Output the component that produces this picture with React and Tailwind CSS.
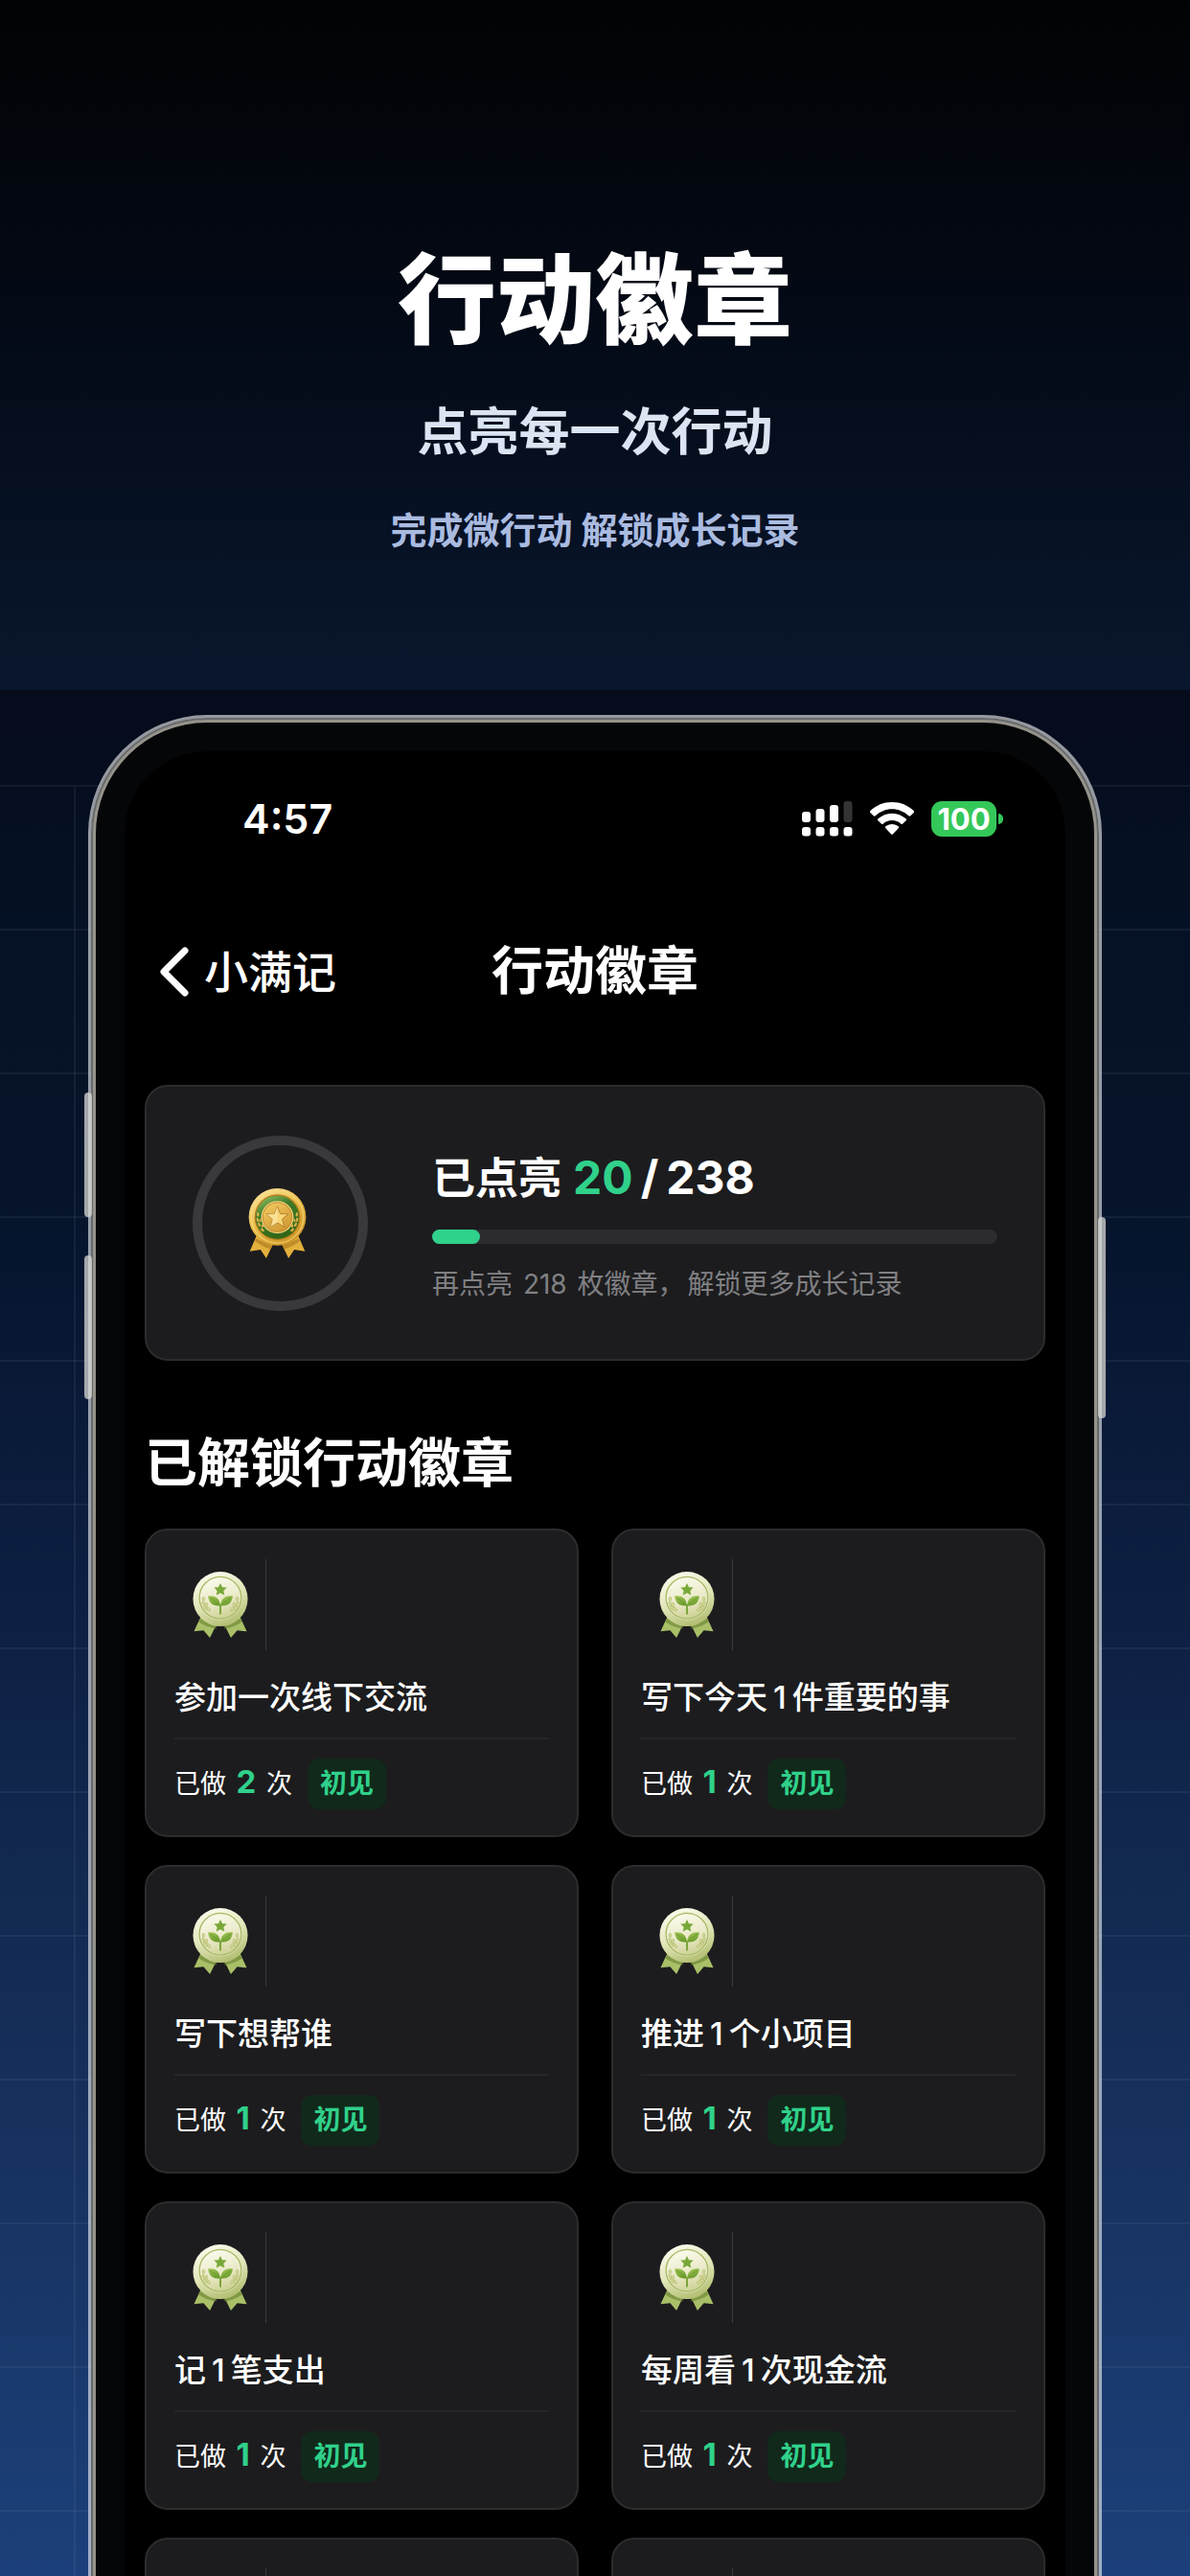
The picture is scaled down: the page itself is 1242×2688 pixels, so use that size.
const badges = [
  { title: '参加一次线下交流', count: 2, level: '初见' },
  { title: '写下今天1件重要的事', count: 1, level: '初见' },
  { title: '写下想帮谁', count: 1, level: '初见' },
  { title: '推进1个小项目', count: 1, level: '初见' },
  { title: '记1笔支出', count: 1, level: '初见' },
  { title: '每周看1次现金流', count: 1, level: '初见' },
];

const unlocked = 20;
const total = 238;

const SignalIcon = () => (
  <svg viewBox="0 0 53 37" className="w-[53px] h-[37px]" fill="#fff">
    <rect x="0" y="11" width="9" height="11" rx="3" />
    <rect x="14.5" y="8" width="9" height="14" rx="3" />
    <rect x="29" y="4" width="9" height="18" rx="3" />
    <rect x="43.5" y="0" width="9" height="22" rx="3" fill="#333" />
    <rect x="0" y="27" width="9" height="9.5" rx="3" />
    <rect x="14.5" y="27" width="9" height="9.5" rx="3" />
    <rect x="29" y="27" width="9" height="9.5" rx="3" />
    <rect x="43.5" y="27" width="9" height="9.5" rx="3" />
  </svg>
);

const WifiIcon = () => (
  <svg viewBox="0 0 138 102" className="w-[46px] h-[34px]" fill="#fff">
    <path d="M69 0C43 0 19 10 1 27Q-1 30 1 33L11 43Q14 45 17 43C31 30 49 22 69 22S107 30 121 43Q124 45 127 43L137 33Q139 30 137 27C119 10 95 0 69 0Z" />
    <path d="M69 35C52 35 37 42 25 52Q22 55 25 58L36 68Q38 70 41 68C49 61 58 57 69 57S89 61 97 68Q100 70 102 68L113 58Q116 55 113 52C101 42 86 35 69 35Z" />
    <path d="M69 69C61 69 54 72 49 76Q46 79 49 82L66 100Q69 103 72 100L89 82Q92 79 89 76C84 72 77 69 69 69Z" />
  </svg>
);

const GoldBadge = () => (
  <svg viewBox="0 0 182 220" className="w-[61px] h-[73px]">
    <defs>
      <linearGradient id="gold" x1="0.2" y1="0" x2="0.8" y2="1">
        <stop offset="0" stopColor="#fbe39a" />
        <stop offset="0.45" stopColor="#e9bd49" />
        <stop offset="1" stopColor="#c98f20" />
      </linearGradient>
      <linearGradient id="goldCore" x1="0.2" y1="0" x2="0.8" y2="1">
        <stop offset="0" stopColor="#f0c85f" />
        <stop offset="1" stopColor="#cf9630" />
      </linearGradient>
      <linearGradient id="greenRing" x1="0.2" y1="0" x2="0.7" y2="1">
        <stop offset="0" stopColor="#8bbb62" />
        <stop offset="0.35" stopColor="#3f7a28" />
        <stop offset="1" stopColor="#2f6416" />
      </linearGradient>
    </defs>
    <path d="M26 148L4 198L38 193L56 220L78 174Z" fill="#e3b03c" />
    <path d="M156 148L178 198L144 193L126 220L104 174Z" fill="#e3b03c" />
    <path d="M24 158L76 180L70 192Q40 182 20 166ZM158 158L106 180L112 192Q142 182 162 166Z" fill="#a8741c" opacity="0.6" />
    <circle cx="91" cy="90" r="90" fill="url(#gold)" />
    <circle cx="91" cy="90" r="82" fill="none" stroke="#f9dc85" strokeWidth="4" opacity="0.7" />
    <circle cx="91" cy="91" r="72" fill="#b57e1e" />
    <circle cx="91" cy="91" r="68" fill="url(#greenRing)" />
    <circle cx="91" cy="91" r="51" fill="#f2d27b" />
    <circle cx="91" cy="91" r="47" fill="#b67e25" />
    <circle cx="91" cy="91" r="45" fill="url(#goldCore)" />
    <path d="M91 56L100 80L125 81L106 97L113 122L91 108L69 122L76 97L57 81L82 80Z" fill="#f8d67a" stroke="#b8822a" strokeWidth="3" />
    <path d="M91 56L91 108L69 122L76 97L57 81L82 80Z" fill="#fce7a6" opacity="0.6" />
    <g fill="#dcb348">
      <ellipse cx="30" cy="82" rx="3.5" ry="7" />
      <ellipse cx="29" cy="99" rx="3.5" ry="7" transform="rotate(-12 29 99)" />
      <ellipse cx="37" cy="101" rx="3" ry="6" transform="rotate(18 37 101)" />
      <ellipse cx="34" cy="114" rx="3.5" ry="7" transform="rotate(-30 34 114)" />
      <ellipse cx="44" cy="118" rx="3" ry="6" />
      <ellipse cx="44" cy="131" rx="3.5" ry="7" transform="rotate(-48 44 131)" />
      <ellipse cx="152" cy="82" rx="3.5" ry="7" />
      <ellipse cx="153" cy="99" rx="3.5" ry="7" transform="rotate(12 153 99)" />
      <ellipse cx="145" cy="101" rx="3" ry="6" transform="rotate(-18 145 101)" />
      <ellipse cx="148" cy="114" rx="3.5" ry="7" transform="rotate(30 148 114)" />
      <ellipse cx="138" cy="118" rx="3" ry="6" />
      <ellipse cx="138" cy="131" rx="3.5" ry="7" transform="rotate(48 138 131)" />
    </g>
  </svg>
);

const SproutBadge = () => (
  <svg viewBox="0 0 174 208" className="w-[58px] h-[69px]">
    <defs>
      <linearGradient id="rim" x1="0.3" y1="0" x2="0.7" y2="1">
        <stop offset="0" stopColor="#fbfbec" />
        <stop offset="0.5" stopColor="#e2e5b8" />
        <stop offset="1" stopColor="#aebb6c" />
      </linearGradient>
      <linearGradient id="face" x1="0.3" y1="0" x2="0.6" y2="1">
        <stop offset="0" stopColor="#fcfbee" />
        <stop offset="0.6" stopColor="#e9e9c6" />
        <stop offset="1" stopColor="#ccd193" />
      </linearGradient>
      <linearGradient id="leaf" x1="0" y1="0" x2="0.5" y2="1">
        <stop offset="0" stopColor="#a5c858" />
        <stop offset="1" stopColor="#6c9c2c" />
      </linearGradient>
    </defs>
    <path d="M26 140L4 188L34 185L54 208L78 160Z" fill="#a9bf68" />
    <path d="M148 140L170 188L140 185L120 208L96 160Z" fill="#a9bf68" />
    <path d="M24 148L78 168L73 180Q40 172 19 158ZM150 148L96 168L101 180Q134 172 155 158Z" fill="#65812e" opacity="0.6" />
    <circle cx="87" cy="86" r="86" fill="url(#rim)" />
    <circle cx="87" cy="82" r="70" fill="#f3f3d6" opacity="0.8" />
    <circle cx="87" cy="82" r="66" fill="url(#face)" stroke="#a8b964" strokeWidth="4" />
    <path d="M87 36L93 49L107 50L97 60L100 74L87 67L74 74L77 60L67 50L81 49Z" fill="#78a838" />
    <path d="M48 77C70 74 85 84 86 106C66 111 51 100 48 77Z" fill="url(#leaf)" />
    <path d="M126 77C104 74 89 84 88 106C108 111 123 100 126 77Z" fill="url(#leaf)" />
    <path d="M54 82Q72 90 87 110V133M120 82Q102 90 87 110" fill="none" stroke="#6d9a33" strokeWidth="3" />
    <path d="M87 104V132" stroke="#7ba53c" strokeWidth="6" strokeLinecap="round" />
    <g fill="#d5d797" stroke="#abb566" strokeWidth="1.5">
      <ellipse cx="34" cy="86" rx="4" ry="7" />
      <ellipse cx="34" cy="101" rx="4" ry="7" transform="rotate(-25 34 101)" />
      <ellipse cx="43" cy="104" rx="4" ry="7" transform="rotate(8 43 104)" />
      <ellipse cx="40" cy="115" rx="4" ry="8" transform="rotate(-45 40 115)" />
      <ellipse cx="50" cy="118" rx="4" ry="8" transform="rotate(-35 50 118)" />
      <ellipse cx="140" cy="86" rx="4" ry="7" />
      <ellipse cx="140" cy="101" rx="4" ry="7" transform="rotate(25 140 101)" />
      <ellipse cx="131" cy="104" rx="4" ry="7" transform="rotate(-8 131 104)" />
      <ellipse cx="134" cy="115" rx="4" ry="8" transform="rotate(45 134 115)" />
      <ellipse cx="124" cy="118" rx="4" ry="8" transform="rotate(35 124 118)" />
    </g>
  </svg>
);

const StatusBar = () => (
  <div className="flex items-center justify-between pl-[123px] pr-[65px] pt-[45px]">
    <span className="text-[43px] leading-[50px] font-semibold">4:57</span>
    <div className="flex items-center gap-[18px]">
      <SignalIcon />
      <WifiIcon />
      <div className="flex items-center gap-[2px]">
        <span className="w-[68px] h-[37px] rounded-[11px] bg-[#34c759] text-center text-[31px] leading-[37px] font-bold">100</span>
        <span className="w-[5px] h-[11px] rounded-r-full bg-[#34c759]" />
      </div>
    </div>
  </div>
);

const NavBar = () => (
  <nav className="grid grid-cols-[1fr_auto_1fr] items-center px-[37px] mt-[99px]">
    <button className="flex items-center gap-[16px] text-[46px] leading-[72px] font-medium">
      <svg viewBox="0 0 30 52" className="w-[30px] h-[52px]" fill="none" stroke="#fff" strokeWidth="7" strokeLinecap="round" strokeLinejoin="round">
        <path d="M26 4L4 26L26 48" />
      </svg>
      小满记
    </button>
    <h2 className="text-[54px] leading-[72px] font-bold">行动徽章</h2>
  </nav>
);

const SummaryCard = () => (
  <div className="flex items-center gap-[67px] mt-[82px] h-[288px] px-[48px] rounded-[24px] border-2 border-[#2c2c2e] bg-[#1c1c1e]">
    <div className="flex items-center justify-center shrink-0 w-[183px] h-[183px] pr-[6px] rounded-full border-10 border-[#39393b]">
      <GoldBadge />
    </div>
    <div className="flex-1 pt-1">
      <p className="flex items-baseline gap-2 text-[48px] leading-[64px] font-bold">
        <span className="mr-1 text-[45px]">已点亮</span>
        <span className="text-[#30d18b]">{unlocked}</span>
        <span>/</span>
        <span>{total}</span>
      </p>
      <div className="mt-[21px] h-[15px] rounded-full bg-[#2c2c2e]">
        <div className="h-full rounded-full bg-[#30d18b]" style={{ width: `${(unlocked / total) * 100}%` }} />
      </div>
      <p className="mt-[22px] text-[28px] leading-[40px] text-[#808083]">
        再点亮 <span className="mx-[3px]">{total - unlocked}</span> 枚徽章，<span className="ml-[3px]">解锁更多成长记录</span>
      </p>
    </div>
  </div>
);

// Digits inside a Chinese title get a little air on both sides
const BadgeTitle = ({ text }) => (
  <h4 className="mt-[28px] text-[33px] leading-[42px] font-medium">
    {text.split(/(\d+)/).map((part, i) =>
      /\d/.test(part) ? <span key={i} className="mx-[6px]">{part}</span> : part
    )}
  </h4>
);

const BadgeCard = ({ title, count, level }) => (
  <div className="px-[29px] pt-[30px] pb-[27px] rounded-[24px] border-2 border-[#2c2c2e] bg-[#1c1c1e]">
    <div className="flex items-center justify-center w-[96px] h-[95px] border-r border-[#363d3a]">
      <SproutBadge />
    </div>
    {title && (
      <>
        <BadgeTitle text={title} />
        <div className="flex items-center h-[75px] mt-[21px] pt-[20px] border-t-2 border-[#262628]">
          <p className="text-[27px] leading-[53px]">
            已做 <span className="mx-[3px] text-[33px] leading-none font-bold text-[#30d18b]">{count}</span> 次
          </p>
          <span className="ml-[16px] px-[13px] rounded-[12px] bg-[#10291b] text-[28px] leading-[53px] font-bold text-[#30d18b]">{level}</span>
        </div>
      </>
    )}
  </div>
);

const App = () => {
  return (
    <main className="h-screen overflow-hidden flex flex-col bg-black text-white font-['Inter','Noto_Sans_CJK_SC',sans-serif]">
      <header className="shrink-0 h-[720px] pt-[254px] text-center bg-linear-to-b from-[#020305] via-[#040b18] to-[#09172e]">
        <h1 className="text-[103px] leading-[120px] font-black">行动徽章</h1>
        <p className="mt-[47px] text-[53px] leading-[60px] font-bold text-[#dbe4f2]">点亮每一次行动</p>
        <p className="mt-[50px] text-[38px] leading-[44px] font-bold text-[#aabbe0]">完成微行动 解锁成长记录</p>
      </header>

      <section className="relative flex-1 min-h-0 px-[92px] pt-[26px] bg-[linear-gradient(180deg,#060c1c_0%,#050c1d_3%,#051022_8%,#06142c_28%,#0b1c3c_42%,#17325f_78%,#1c407b_100%)]">
        {/* Blueprint grid behind the phone */}
        <div className="absolute inset-x-0 top-[99px] bottom-0 bg-[linear-gradient(180deg,rgba(148,163,184,0.09)_2px,transparent_2px)] bg-[length:100%_150px]" />
        <div className="absolute left-[77px] top-[101px] bottom-0 w-[2px] bg-slate-400/10" />

        {/* Phone */}
        <div className="relative p-[35px] rounded-[124px] border-3 border-white/58 bg-clip-padding bg-[#040608] shadow-[inset_0_0_0_2px_#66696b,inset_0_0_0_5px_#96938b]">
          <span className="absolute left-[-7px] top-[391px] w-[8px] h-[130px] rounded-full bg-[#d8d8d4]/75" />
          <span className="absolute left-[-7px] top-[561px] w-[8px] h-[150px] rounded-full bg-[#d8d8d4]/75" />
          <span className="absolute right-[-7px] top-[521px] w-[8px] h-[210px] rounded-full bg-[#d8d8d4]/75" />

          <div className="px-[21px] pb-[60px] rounded-[86px] bg-black">
            <div className="-mx-[21px]">
              <StatusBar />
              <NavBar />
            </div>
            <SummaryCard />
            <h3 className="mt-[70px] text-[55px] leading-[72px] font-bold">已解锁行动徽章</h3>
            <div className="grid grid-cols-2 gap-x-[34px] gap-y-[29px] mt-[33px]">
              {badges.map((badge) => (
                <BadgeCard key={badge.title} {...badge} />
              ))}
              <BadgeCard />
              <BadgeCard />
            </div>
          </div>
        </div>
      </section>
    </main>
  );
};

export default App;
